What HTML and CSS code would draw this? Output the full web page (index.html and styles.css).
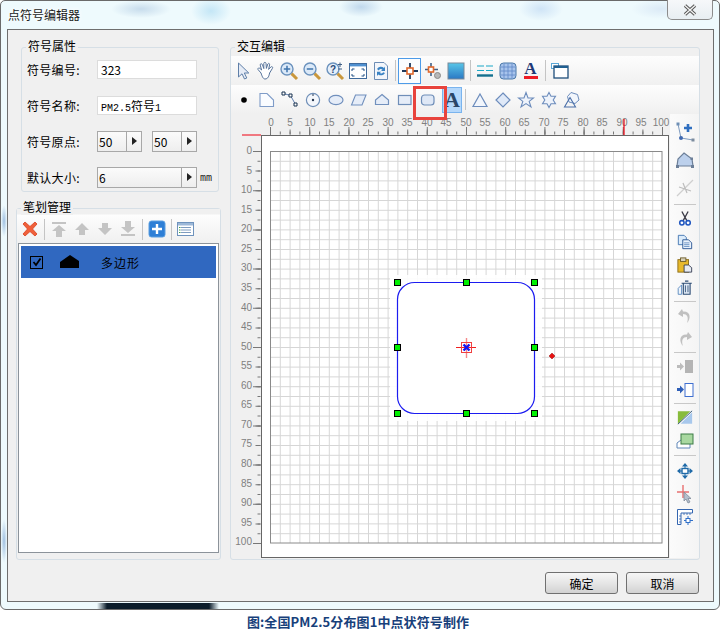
FILE: index.html
```html
<!DOCTYPE html>
<html>
	<head>
		<meta charset="utf-8">
		<title>点符号编辑器</title>
		<link rel="stylesheet" href="styles.css">
	</head>
	<body>
		<div class="window">
			<div class="titlebar">
				<span class="title">点符号编辑器</span>
				<div class="close">
					<svg width="14" height="12" viewBox="0 0 14 12"><path d="M2 1.5 L12 10.5 M12 1.5 L2 10.5" stroke="#555" stroke-width="3.4" fill="none"/><path d="M2 1.5 L12 10.5 M12 1.5 L2 10.5" stroke="#f4f4f4" stroke-width="1.4" fill="none"/></svg>
				</div>
			</div>
			<div class="panel">
				<div class="main">
					<!-- 左侧 -->
					<div class="left">
						<div class="group attrs">
							<span class="legend">符号属性</span>
							<div class="form">
								<div class="row"><label>符号编号:</label><div class="field">323</div></div>
								<div class="row"><label>符号名称:</label><div class="field"><span class="mono">PM2.5</span>符号<span class="mono">1</span></div></div>
								<div class="row"><label>符号原点:</label>
									<div class="spin small"><span>50</span><i></i></div>
									<div class="spin small"><span>50</span><i></i></div>
								</div>
								<div class="row"><label>默认大小:</label>
									<div class="spin"><span>6</span><i></i></div>
									<span class="unit">mm</span>
								</div>
							</div>
						</div>
						<div class="group strokes">
							<span class="legend">笔划管理</span>
							<div class="toolbar stroke-bar">
								<div class="tool"><svg width="20" height="20" viewBox="0 0 20 20"><path d="M3 5 L5 3 L10 7.5 L15 3 L17 5 L12.5 10 L17 15 L15 17 L10 12.5 L5 17 L3 15 L7.5 10Z" fill="#f0603a" stroke="#d8401f" stroke-width=".8"/></svg></div>
								<div class="sep"></div>
								<div class="tool"><svg width="20" height="20" viewBox="0 0 20 20"><path d="M3 3H17V5H3Z M10 6 L17 12H13V18H7V12H3Z" fill="#c4c4c4"/></svg></div>
								<div class="tool"><svg width="20" height="20" viewBox="0 0 20 20"><path d="M10 4 L17 11H13V16H7V11H3Z" fill="#c4c4c4"/></svg></div>
								<div class="tool"><svg width="20" height="20" viewBox="0 0 20 20"><path d="M7 4H13V9H17L10 16 L3 9H7Z" fill="#c4c4c4"/></svg></div>
								<div class="tool"><svg width="20" height="20" viewBox="0 0 20 20"><path d="M7 2H13V8H17L10 14 L3 8H7Z M3 15H17V17H3Z" fill="#c4c4c4"/></svg></div>
								<div class="sep"></div>
								<div class="tool"><svg width="18" height="18" viewBox="0 0 18 18"><rect x="1" y="1" width="16" height="16" rx="2.5" fill="#2e7fd6" stroke="#5a9ee0"/><path d="M9 4V14 M4 9H14" stroke="#fff" stroke-width="2.4"/></svg></div>
								<div class="sep"></div>
								<div class="tool"><svg width="18" height="16" viewBox="0 0 18 16"><rect x=".5" y="1.5" width="16" height="13" fill="#fff" stroke="#6f93bd"/><rect x="1" y="2" width="15" height="2.5" fill="#9db8d8"/><path d="M4 6.5H14 M4 9H14 M4 11.5H14" stroke="#7f9cc0"/><path d="M2 6.5H3.5 M2 9H3.5 M2 11.5H3.5" stroke="#3fa04a"/></svg></div>
							</div>
							<div class="list">
								<div class="list-row">
									<span class="check"><svg width="10" height="10" viewBox="0 0 10 10"><path d="M1.5 5 L4 8 L8.5 1.5" fill="none" stroke="#000" stroke-width="1.8"/></svg></span>
									<svg class="mark" width="20" height="14" viewBox="0 0 20 14"><path d="M0 7 L10 0 L19 6 V13 H0Z" fill="#000"/></svg>
									<span class="list-text">多边形</span>
								</div>
							</div>
						</div>
					</div>
					<!-- 右侧 -->
					<div class="group editor">
						<span class="legend">交互编辑</span>
						<div class="toolbar bar-one">
							<div class="tool"><svg width="20" height="20" viewBox="0 0 20 20"><path d="M5.5 2 V16 L9 12.8 L11.5 18 L13.8 17 L11.3 12 H15.8Z" fill="#e6ecf6" stroke="#5f7fa8"/></svg></div>
							<div class="tool"><svg width="22" height="22" viewBox="0 0 22 22"><path d="M6 13 L3 9.5 C2.5 8 4 7.5 5 8.5 L6.6 10 L5.2 5 C5 3.6 6.8 3.2 7.4 4.6 L8.8 8.6 L8.8 3.4 C9 2 10.8 2 11 3.4 L11.4 8.4 L12.8 4 C13.4 2.8 15 3.4 14.6 4.8 L13.6 9.4 L15.8 7 C17 6 18.2 7.2 17.4 8.4 L14.6 13 C14 16 13 19 10 19 C8 19 7 16 6 13Z" fill="#fff" stroke="#56739b" stroke-linejoin="round"/></svg></div>
							<div class="tool"><svg width="20" height="20" viewBox="0 0 20 20"><circle cx="8" cy="8" r="6" fill="#dbe9f8" stroke="#6b92bd" stroke-width="1.4"/><path d="M8 4.8V11.2 M4.8 8H11.2" stroke="#3f74ad" stroke-width="1.5"/><path d="M12.6 12.6 L18 18" stroke="#c9973c" stroke-width="3"/></svg></div>
							<div class="tool"><svg width="20" height="20" viewBox="0 0 20 20"><circle cx="8" cy="8" r="6" fill="#dbe9f8" stroke="#6b92bd" stroke-width="1.4"/><path d="M4.8 8H11.2" stroke="#3f74ad" stroke-width="1.5"/><path d="M12.6 12.6 L18 18" stroke="#c9973c" stroke-width="3"/></svg></div>
							<div class="tool"><svg width="20" height="20" viewBox="0 0 20 20"><circle cx="8" cy="8" r="6" fill="#e6eff9" stroke="#6b92bd" stroke-width="1.4"/><text x="8" y="12" class="icon-q">?</text><path d="M12.6 12.6 L18 18" stroke="#c9973c" stroke-width="3"/><path d="M15 1.5V6 M13 3.5H17 M13 8H17" stroke="#3f5f85"/></svg></div>
							<div class="tool"><svg width="20" height="18" viewBox="0 0 20 18"><rect x="1.5" y="1.5" width="17" height="15" fill="#fff" stroke="#3f6a9c"/><rect x="2" y="2" width="16" height="2.4" fill="#4f90d0"/><path d="M4 9V7H6.5 M13.5 7H16V9 M16 12V14H13.5 M6.5 14H4V12" fill="none" stroke="#1f4f84"/></svg></div>
							<div class="tool"><svg width="18" height="20" viewBox="0 0 18 20"><path d="M2.5 1.5H12 L15.5 5V18.5H2.5Z" fill="#f3f6fb" stroke="#6d8db5"/><path d="M5 8 A4.5 4.5 0 0 1 12 7 L13 5.5V10H9 L10.5 8.6 A2.6 2.6 0 0 0 6.8 9.4Z" fill="#3a83c4"/><path d="M13 12 A4.5 4.5 0 0 1 6.3 13.4 L5 15V10.8H9.2 L7.7 12 A2.6 2.6 0 0 0 11.2 11.2Z" fill="#3a83c4"/></svg></div>
							<div class="sep"></div>
							<div class="tool on"><svg width="20" height="20" viewBox="0 0 20 20"><path d="M10 2V18 M2 10H18" stroke="#1f3a5c" stroke-width="1.8"/><rect x="7" y="7" width="6" height="6" fill="#fff" stroke="#e0682c" stroke-width="1.6"/></svg></div>
							<div class="tool"><svg width="20" height="20" viewBox="0 0 20 20"><path d="M8 2V15 M2 8.5H15" stroke="#3f5f85" stroke-width="1.6"/><rect x="5.5" y="6" width="5" height="5" fill="#fff" stroke="#e0682c" stroke-width="1.6"/><circle cx="14.5" cy="14.5" r="3" fill="#b8b8b8" stroke="#8a8a8a"/></svg></div>
							<div class="tool"><svg width="18" height="18" viewBox="0 0 18 18"><defs><linearGradient id="sea" x1="0" y1="0" x2="0" y2="1"><stop offset="0" stop-color="#58c6e8"/><stop offset="1" stop-color="#2a78c4"/></linearGradient></defs><rect x="1" y="1" width="16" height="16" fill="url(#sea)" stroke="#7a8a99"/></svg></div>
							<div class="sep"></div>
							<div class="tool"><svg width="18" height="14" viewBox="0 0 18 14"><path d="M1 2H8 M10 2H17 M1 6.5H8 M10 6.5H17" stroke="#1aa8c8" stroke-width="1.2"/><path d="M1 11.5H17" stroke="#14708e" stroke-width="2.4"/></svg></div>
							<div class="tool"><svg width="18" height="18" viewBox="0 0 18 18"><rect x="1" y="1" width="16" height="16" rx="3.5" fill="#a8c4ec" stroke="#4a78a8"/><path d="M5 1.5V16.5 M9 1.5V16.5 M13 1.5V16.5 M1.5 5H16.5 M1.5 9H16.5 M1.5 13H16.5" stroke="#5f88c8" stroke-width=".8"/></svg></div>
							<div class="tool font-tool"><span class="font-a">A</span><span class="font-line"></span></div>
							<div class="sep"></div>
							<div class="tool"><svg width="18" height="16" viewBox="0 0 18 16"><rect x=".5" y=".5" width="7" height="5" fill="#fff" stroke="#5aa8d8"/><rect x="3" y="3" width="14" height="12" fill="#fff" stroke="#1f4f7c" stroke-width="1.3"/><rect x="3" y="3" width="14" height="2" fill="#1f5f90"/></svg></div>
						</div>
						<div class="toolbar bar-two">
							<div class="tool"><svg width="8" height="8" viewBox="0 0 8 8"><circle cx="4" cy="4" r="2.8" fill="#000"/></svg></div>
							<div class="tool"><svg width="18" height="18" viewBox="0 0 18 18"><path d="M2 2.5H9 L15.5 9V15.5H2Z" fill="#fafcff" stroke="#7f9cc8" stroke-width="1.1"/></svg></div>
							<div class="tool"><svg width="18" height="18" viewBox="0 0 18 18"><path d="M2.5 2.5 L9.5 4.5 L14.5 13.5" fill="none" stroke="#5f7fb0"/><path d="M1 1H4V4H1Z M8 3H11V6H8Z M13 12H16V15H13Z" fill="#fff" stroke="#16304f"/></svg></div>
							<div class="tool"><svg width="18" height="18" viewBox="0 0 18 18"><circle cx="9" cy="9" r="6.6" fill="#f4f7fc" stroke="#6f8fb8" stroke-width="1.2"/><circle cx="9" cy="9" r="1.2" fill="#24364f"/><path d="M9 3V5" stroke="#24364f"/></svg></div>
							<div class="tool"><svg width="18" height="14" viewBox="0 0 18 14"><ellipse cx="9" cy="7" rx="7" ry="4.6" fill="#e6edf8" stroke="#7190bd" stroke-width="1.2"/></svg></div>
							<div class="tool"><svg width="18" height="14" viewBox="0 0 18 14"><path d="M5.5 2H16 L12 12H1.5Z" fill="#e6edf8" stroke="#7190bd" stroke-width="1.1"/></svg></div>
							<div class="tool"><svg width="18" height="14" viewBox="0 0 18 14"><path d="M9 1.5 L15.5 7V11.5H2.5V7Z" fill="#e6edf8" stroke="#7190bd" stroke-width="1.2"/></svg></div>
							<div class="tool"><svg width="16" height="14" viewBox="0 0 16 14"><rect x="1.5" y="2.5" width="12.5" height="9" fill="#e6edf8" stroke="#6f8eb8" stroke-width="1.2"/></svg></div>
							<div class="tool marked"><svg width="16" height="14" viewBox="0 0 16 14"><rect x="1.5" y="2" width="12.5" height="10" rx="3" fill="#dfe8f6" stroke="#6f8eb8" stroke-width="1.2"/></svg></div>
							<div class="tool on-fill"><span class="big-a">A</span></div>
							<div class="sep"></div>
							<div class="tool"><svg width="18" height="16" viewBox="0 0 18 16"><path d="M9 2 L16 14.5H2Z" fill="#f2f6fc" stroke="#6c8cbc" stroke-width="1.2"/></svg></div>
							<div class="tool"><svg width="18" height="18" viewBox="0 0 18 18"><path d="M9 2 L16 9 L9 16 L2 9Z" fill="#dfe9f8" stroke="#6c8cbc" stroke-width="1.2"/></svg></div>
							<div class="tool"><svg width="18" height="18" viewBox="0 0 18 18"><path d="M9 1.5 L11 7H16.5 L12.2 10.4 L14 16 L9 12.6 L4 16 L5.8 10.4 L1.5 7H7Z" fill="#eef3fb" stroke="#6c8cbc" stroke-width="1.1"/></svg></div>
							<div class="tool"><svg width="18" height="18" viewBox="0 0 18 18"><path d="M9 1.5 L11 5.2H15.5 L13.2 9 L15.5 12.8H11 L9 16.5 L7 12.8H2.5 L4.8 9 L2.5 5.2H7Z" fill="#eef3fb" stroke="#6c8cbc" stroke-width="1.1"/></svg></div>
							<div class="tool"><svg width="18" height="18" viewBox="0 0 18 18"><path d="M8 1.5 L14.5 3.5 L16 9 L12 12.5 L6 11 L4.5 5.5Z" fill="#f2f6fc" stroke="#6c8cbc"/><path d="M7 6.5 L12.5 16H1.5Z" fill="none" stroke="#4a6fa8" stroke-width="1.1"/></svg></div>
						</div>
						<div class="work">
							<svg class="canvas" width="439" height="443" viewBox="231 115 439 443">
								<defs>
									<pattern id="cell" x="270" y="151" width="9.8" height="9.8" patternUnits="userSpaceOnUse">
										<path d="M.5 0V9.8 M0 .5H9.8" stroke="#d6d6d6" fill="none"/>
									</pattern>
								</defs>
								<rect x="261.5" y="135.5" width="407" height="422" fill="#fff" stroke="#666"/>
								<rect x="270" y="151" width="392" height="392" fill="url(#cell)"/>
								<rect x="270.5" y="151.5" width="391.5" height="391.5" fill="none" stroke="#8a8a8a"/>
								<!-- 顶部标尺 -->
								<g class="ticks">
									<line x1="270" y1="133" x2="663" y2="133" stroke-width="3" stroke-dasharray="1 8.8"/>
									<line x1="270" y1="132" x2="663" y2="132" stroke-width="5" stroke-dasharray="1 18.6"/>
									<line x1="270" y1="131" x2="663" y2="131" stroke-width="8" stroke-dasharray="1 38.2"/>
									<line x1="259" y1="151" x2="259" y2="544" stroke-width="3" stroke-dasharray="1 8.8"/>
									<line x1="258" y1="151" x2="258" y2="544" stroke-width="5" stroke-dasharray="1 18.6"/>
									<line x1="257" y1="151" x2="257" y2="544" stroke-width="8" stroke-dasharray="1 38.2"/>
								</g>
								<g class="ruler-x">
									<text x="271" y="126">0</text><text x="290" y="126">5</text><text x="310" y="126">10</text><text x="329" y="126">15</text><text x="349" y="126">20</text><text x="368" y="126">25</text><text x="388" y="126">30</text><text x="407" y="126">35</text><text x="427" y="126">40</text><text x="446" y="126">45</text><text x="466" y="126">50</text><text x="485" y="126">55</text><text x="505" y="126">60</text><text x="524" y="126">65</text><text x="544" y="126">70</text><text x="563" y="126">75</text><text x="583" y="126">80</text><text x="602" y="126">85</text><text x="622" y="126">90</text><text x="641" y="126">95</text><text x="661" y="126">100</text>
								</g>
								<g class="ruler-y">
									<text x="252" y="154">0</text><text x="252" y="174">5</text><text x="252" y="193">10</text><text x="252" y="213">15</text><text x="252" y="232">20</text><text x="252" y="252">25</text><text x="252" y="271">30</text><text x="252" y="291">35</text><text x="252" y="311">40</text><text x="252" y="330">45</text><text x="252" y="350">50</text><text x="252" y="369">55</text><text x="252" y="389">60</text><text x="252" y="408">65</text><text x="252" y="428">70</text><text x="252" y="447">75</text><text x="252" y="467">80</text><text x="252" y="487">85</text><text x="252" y="506">90</text><text x="252" y="526">95</text><text x="252" y="545">100</text>
								</g>
								<path d="M242 135H261 M624 119V135" stroke="#f00010" stroke-width="1.2" fill="none"/>
								<!-- 圆角矩形 -->
								<rect x="390" y="275" width="152" height="146" fill="#fff" opacity=".9"/>
								<rect x="397.5" y="282.5" width="137" height="131" rx="17" fill="#fff" stroke="#1c1cf0" stroke-width="1.2"/>
								<g class="handle">
									<rect x="394.5" y="279.5" width="6" height="6"/><rect x="463.5" y="279.5" width="6" height="6"/><rect x="531.5" y="279.5" width="6" height="6"/>
									<rect x="394.5" y="344.5" width="6" height="6"/><rect x="531.5" y="344.5" width="6" height="6"/>
									<rect x="394.5" y="410.5" width="6" height="6"/><rect x="463.5" y="410.5" width="6" height="6"/><rect x="531.5" y="410.5" width="6" height="6"/>
								</g>
								<path d="M456 347.5H476" stroke="#f02020"/>
								<path d="M466.5 338V358" stroke="#f58a8a" stroke-width="1.4"/>
								<rect x="461.5" y="342.5" width="10" height="10" fill="none" stroke="#f04040"/>
								<path d="M463.5 344.5 L469.5 350.5 M469.5 344.5 L463.5 350.5" stroke="#1414f0" stroke-width="2.4"/>
								<path d="M552 353 L555 356 L552 359 L549 356Z" fill="#e81010" stroke="#901010" stroke-width=".5"/>
							</svg>
							<div class="side">
								<div class="tool tall"><svg width="22" height="22" viewBox="0 0 22 22"><path d="M4 3 L7 17 L19 19" fill="none" stroke="#7f9cc0"/><rect x="2.5" y="1.5" width="3" height="3" fill="#6f8fb5"/><circle cx="7" cy="17" r="2" fill="#3f68b0"/><rect x="17.5" y="17.5" width="3" height="3" fill="#7c8c9e"/><path d="M14 3V11 M10 7H18" stroke="#2f6fc0" stroke-width="2.6"/></svg></div>
								<div class="tool tall"><svg width="20" height="18" viewBox="0 0 20 18"><path d="M9 2 L17 8 L18 15H2 L3 8Z" fill="#bcd0ec" stroke="#6c7f98" stroke-width="1.2"/><path d="M1 14H4V17H1Z M16 14H19V17H16Z M15.5 6.5H18V9H15.5Z" fill="#6c7f98"/></svg></div>
								<div class="tool tall"><svg width="20" height="20" viewBox="0 0 20 20"><path d="M2 18 L18 2" stroke="#cfcfcf" stroke-width="1.2"/><path d="M4 9 L16 13 M8 5 L12 15" stroke="#bdbdbd" stroke-width="1.2"/></svg></div>
								<div class="vsep"></div>
								<div class="tool"><svg width="14" height="17" viewBox="0 0 18 20"><path d="M5 1 L11.5 13 M13 1 L6.5 13" stroke="#3a3a46" stroke-width="1.7"/><circle cx="5" cy="15.5" r="2.8" fill="#fff" stroke="#2258c0" stroke-width="2"/><circle cx="13" cy="15.5" r="2.8" fill="#fff" stroke="#2258c0" stroke-width="2"/></svg></div>
								<div class="tool"><svg width="16" height="16" viewBox="0 0 18 18"><path d="M1.5 1.5H8 L10.5 4V12H1.5Z" fill="#dcecfb" stroke="#3f72b0"/><path d="M6.5 6.5H13 L16.5 10V16.5H6.5Z" fill="#e9f2fc" stroke="#23508f"/><path d="M8 10H14 M8 12H14 M8 14H14" stroke="#3f72b0" stroke-width=".8"/></svg></div>
								<div class="tool"><svg width="16" height="16" viewBox="0 0 18 18"><rect x="1" y="3" width="12" height="14" fill="#e7b92c" stroke="#8a6a14"/><rect x="4" y="1" width="6" height="4" fill="#d8d0b8" stroke="#6a5a28"/><path d="M8 9H13 L16.5 12V17H8Z" fill="#e8ecf2" stroke="#333c52"/></svg></div>
								<div class="tool"><svg width="16" height="17" viewBox="0 0 18 20"><path d="M1 11 L5 7V18H1Z" fill="#eef4fb" stroke="#4f82bc"/><path d="M5 5H17 M7 5V18H15V5 M9 2.5H13" fill="#dfe9f5" stroke="#2c4c74" stroke-width="1.3"/><path d="M9.5 7.5V15.5 M12.5 7.5V15.5" stroke="#2c4c74"/></svg></div>
								<div class="vsep"></div>
								<div class="tool"><svg width="18" height="18" viewBox="0 0 18 18"><path d="M6 2 L2 7 L7 10V7 C11 7 13 10 11 16 C15 12 15 4 7 4.5Z" fill="#c0c0c0"/></svg></div>
								<div class="tool"><svg width="18" height="18" viewBox="0 0 18 18"><path d="M12 2 L16 7 L11 10V7 C7 7 5 10 7 16 C3 12 3 4 11 4.5Z" fill="#c0c0c0"/></svg></div>
								<div class="vsep"></div>
								<div class="tool"><svg width="18" height="16" viewBox="0 0 18 16"><rect x="9" y="1" width="8" height="13" fill="#b4b4b4"/><path d="M1 6H4V3.5 L8 7.5 L4 11.5V9H1Z" fill="#bcbcbc"/></svg></div>
								<div class="tool"><svg width="18" height="16" viewBox="0 0 18 16"><rect x="9" y="1.5" width="8" height="13" fill="#fff" stroke="#3f6fd0"/><path d="M1 6H4V3.5 L8 7.5 L4 11.5V9H1Z" fill="#2f5fb8"/></svg></div>
								<div class="vsep"></div>
								<div class="tool"><svg width="16" height="15" viewBox="0 0 18 16"><path d="M1 1H15 L1 15Z" fill="#88bc3c"/><path d="M17 2V15H4Z" fill="#a8c8ec"/><path d="M1 15.5 L17 .5" stroke="#24486c"/></svg></div>
								<div class="tool"><svg width="18" height="18" viewBox="0 0 18 18"><path d="M1 11 L5 8H14V16H1Z" fill="#fff" stroke="#5f86b8"/><rect x="5" y="2" width="12" height="10" fill="#a8d8a0" stroke="#3c7c46"/></svg></div>
								<div class="vsep last"></div>
								<div class="tool"><svg width="18" height="18" viewBox="0 0 18 18"><path d="M9 1 L12 4.5H6Z M9 17 L12 13.5H6Z M1 9 L4.5 6V12Z M17 9 L13.5 6V12Z" fill="#1f6aa8"/><path d="M9 4V14 M4 9H14" stroke="#1f6aa8"/><rect x="6" y="6.5" width="6" height="5" fill="#fff" stroke="#1f6aa8" stroke-width="1.4"/></svg></div>
								<div class="tool"><svg width="18" height="20" viewBox="0 0 18 20"><path d="M7 1V14 M1 8H13" stroke="#e87070" stroke-width="1.4"/><path d="M8 8 V17 L10 15 L12 19 L14 18 L12 14.5 H15Z" fill="#b4bfcc" stroke="#808c9a" stroke-width=".8"/></svg></div>
								<div class="tool"><svg width="18" height="18" viewBox="0 0 18 18"><path d="M1.5 1.5H16.5V5H5V16.5H1.5Z" fill="#fff" stroke="#3466b0"/><path d="M8 5V7 M11 5V7 M14 5V7 M3 8H5 M3 11H5 M3 14H5" stroke="#3466b0" stroke-width=".8"/><path d="M12 8V17 M8 12.5H17" stroke="#2f6fc8"/><rect x="10" y="10.5" width="4" height="4" fill="#fff" stroke="#2f6fc8"/></svg></div>
							</div>
						</div>
					</div>
				</div>
				<div class="foot">
					<button>确定</button>
					<button>取消</button>
				</div>
			</div>
		</div>
		<div class="caption">图:全国PM2.5分布图1中点状符号制作</div>
	</body>
</html>
```

FILE: styles.css
```css
*{
	margin: 0;padding: 0;
	box-sizing: border-box;
}
body{
	background-color: #fff;
	font-family: "Noto Sans CJK SC", "Liberation Sans", sans-serif;
	font-size: 12px;
	color: #000;
}

/* 窗口外框 毛玻璃效果 */
.window{
	width: 720px;height: 610px;
	padding: 0 6px 7px 6px;
	border: 1px solid #6a6a6a;
	border-radius: 5px 5px 6px 6px;
	background-color: #eefafd;
	background-image:
		linear-gradient(90deg, transparent 96px, #0b1c2a 106px, #0b1c2a 208px, transparent 218px),
		radial-gradient(ellipse 30px 9px at 140px 8px, #c7dcec, transparent),
		radial-gradient(ellipse 20px 14px at 210px 10px, #c4e6f6, transparent),
		radial-gradient(ellipse 22px 10px at 360px 6px, #c0d8ec, transparent),
		radial-gradient(ellipse 22px 12px at 540px 8px, #cfe4f6, transparent),
		radial-gradient(ellipse 30px 10px at 660px 8px, #dbeaf6, transparent),
		radial-gradient(ellipse 3px 16px at 3px 220px, #9fbfe0, transparent),
		radial-gradient(ellipse 3px 22px at 3px 540px, #9fbfe0, transparent);
	background-size: 100% 6px, auto, auto, auto, auto, auto, auto, auto, auto;
	background-position: 0 602px, 0 0, 0 0, 0 0, 0 0, 0 0, 0 0, 0 0, 0 0;
	background-repeat: no-repeat;
}
.titlebar{
	height: 28px;
	position: relative;
}
.title{
	display: block;
	padding-left: 1px;
	padding-top: 6px;
	line-height: 16px;
	color: #1a1a1a;
	text-shadow: 0 0 5px #fff, 0 0 5px #fff;
}
.close{
	position: absolute;
	right: 0px;top: -1px;
	width: 46px;height: 20px;
	display: flex;
	align-items: center;justify-content: center;
	background: linear-gradient(#f6f8fa, #e8eef2);
	border: 1px solid #8c8c8c;
	border-top: 0;
	border-radius: 0 0 5px 5px;
}

/* 主面板 */
.panel{
	width: 707px;height: 573px;
	background-color: #f0f0f0;
	border: 1px solid #6e6e6e;
}
.main{
	display: flex;
	height: 530px;
	padding-top: 17px;
}
.left{
	width: 205px;
	margin-left: 8px;
	display: flex;
	flex-direction: column;
	gap: 16px;
}
.group{
	position: relative;
	border: 1px solid #d6dfe6;
	border-radius: 3px;
}
.legend{
	position: absolute;
	top: -10px;left: 4px;
	padding: 0 2px;
	line-height: 16px;
	background-color: #f0f0f0;
}

/* 符号属性 */
.attrs{
	height: 145px;
	margin: 0 2px 0 5px;
}
.form{
	display: grid;
	grid-template-rows: repeat(4, 21px);
	row-gap: 15px;
	padding: 11px 0 0 5px;
}
.row{
	display: flex;
	align-items: center;
}
.row label{
	width: 70px;
	letter-spacing: 0.3px;
}
.field{
	width: 100px;height: 19px;
	padding-left: 3px;
	background-color: #fff;
	border: 1px solid #dcdcdc;
	line-height: 17px;
	font-size: 12px;
}
.mono{
	font-family: "Liberation Mono", monospace;
	font-size: 10px;
}
.spin{
	width: 100px;height: 21px;
	display: flex;
	background: linear-gradient(#fbfbfb, #eeeeee);
	border: 1px solid #a8a8a8;
	line-height: 19px;
	padding-left: 1px;
}
.spin span{
	flex: 1;
}
.spin i{
	width: 15px;
	border-left: 1px solid #a8a8a8;
	position: relative;
}
.spin i::after{
	content: "";
	position: absolute;
	left: 5px;top: 5px;
	border-left: 5px solid #222;
	border-top: 4px solid transparent;
	border-bottom: 4px solid transparent;
}
.spin.small{
	width: 45px;
	margin-right: 10px;
}
.unit{
	margin-left: 3px;
	font-family: "DejaVu Sans Mono", monospace;
	font-size: 10px;
	color: #222;
}

/* 笔划管理 */
.strokes{
	height: 352px;
	display: flex;
	flex-direction: column;
}
.toolbar{
	display: flex;
	align-items: center;
}
.stroke-bar{
	height: 34px;
	padding: 6px 0 0 1px;
	background: linear-gradient(#f0f0f0 5px, #fdfdfd 6px, #f0f0f0);
}
.tool{
	flex: none;
	width: 23px;height: 23px;
	display: flex;
	align-items: center;justify-content: center;
	position: relative;
}
.sep{
	flex: none;
	width: 6px;height: 21px;
	background: linear-gradient(#c4c4c4, #c4c4c4) center/1px 100% no-repeat;
}
.list{
	width: 201px;height: 310px;
	margin-left: 1px;
	padding: 2px;
	background-color: #fff;
	border: 1px solid #8c939a;
}
.list-row{
	height: 32px;
	display: flex;
	align-items: center;
	background-color: #3068c0;
}
.check{
	width: 13px;height: 13px;
	margin-left: 9px;
	display: flex;
	align-items: center;justify-content: center;
	border: 1px solid #000;
}
.mark{
	margin-left: 17px;
}
.list-text{
	margin-left: 21px;
	letter-spacing: 1px;
	color: #000;
}

/* 交互编辑 */
.editor{
	width: 470px;height: 513px;
	margin-left: 9px;
	padding-top: 8px;
}
.bar-one,.bar-two{
	height: 29px;
	background: linear-gradient(#fdfdfd, #f0f0f0);
}
.bar-two{
	padding-left: 1px;
}
.on{
	height: 26px;
	background-color: #fbfdff;
	border: 1px solid #4d9be8;
}
.on-fill{
	width: 20px;height: 26px;
	margin-left: 3px;
	background-color: #b5d8fb;
	border: 1px solid #7ab4ee;
}
.marked{
	z-index: 1;
}
.marked::after{
	content: "";
	position: absolute;
	left: -3px;top: -2px;
	width: 28px;height: 28px;
	border: 3px solid #e8433c;
}
.big-a,.font-a{
	font-family: "Liberation Serif", serif;
	font-weight: bold;
	color: #2a4668;
}
.big-a{
	font-size: 22px;
	line-height: 22px;
}
.font-tool{
	flex-direction: column;
}
.font-a{
	font-size: 17px;
	line-height: 14px;
	color: #1f3a78;
}
.font-line{
	width: 14px;height: 3px;
	background-color: #ee1c25;
}
.work{
	display: flex;
}
.canvas{
	display: block;
	margin-top: 1px;
}
.ticks line{
	stroke: #777;
}
.ruler-x text,.ruler-y text{
	font-family: "Liberation Sans", sans-serif;
	font-size: 10px;
	fill: #808080;
}
.ruler-x text{
	text-anchor: middle;
}
.ruler-y text{
	text-anchor: end;
}
.handle rect{
	fill: #00f000;
	stroke: #000;
}
.icon-q{
	font-family: "Liberation Sans", sans-serif;
	font-size: 10px;
	font-weight: bold;
	fill: #2a4a78;
	text-anchor: middle;
}
.side{
	width: 29px;
	padding-top: 4px;
	display: flex;
	flex-direction: column;
	align-items: center;
	background: linear-gradient(90deg, #fbfbfb, #f4f4f4);
}
.tall{
	height: 28px;
}
.vsep{
	flex: none;
	width: 22px;height: 5px;
	background: linear-gradient(#c8c8c8, #c8c8c8) center/100% 1px no-repeat;
}
.vsep.last{
	height: 7px;
}

/* 底部按钮 */
.foot{
	display: flex;
	justify-content: flex-end;
	gap: 8px;
	padding: 12px 14px 0 0;
}
.foot button{
	width: 73px;height: 22px;
	font-family: inherit;
	font-size: 12px;
	color: #000;
	background: linear-gradient(#f6f6f6, #e6e6e6 50%, #d2d2d2);
	border: 1px solid #707070;
	border-radius: 3px;
}

.caption{
	padding-top: 3px;
	text-align: center;
	font-size: 13px;
	letter-spacing: 0.1px;
	line-height: 18px;
	font-weight: bold;
	color: #17407a;
	margin-left: -4px;
}
```
